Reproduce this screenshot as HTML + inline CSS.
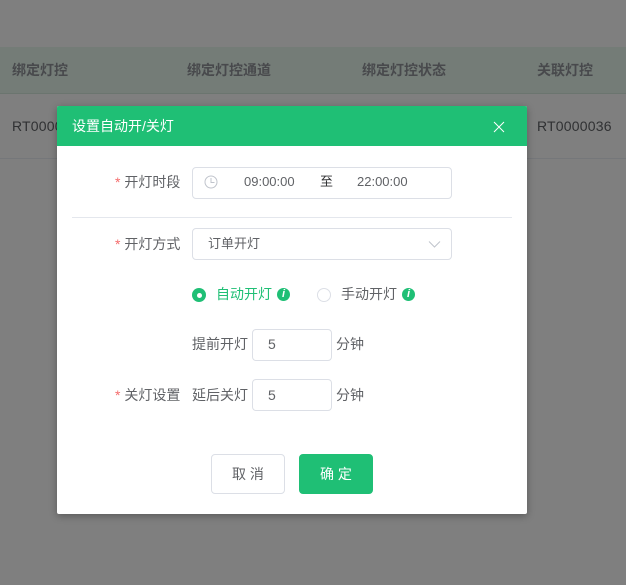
<!DOCTYPE html>
<html><head><meta charset="utf-8">
<style>
html,body{margin:0;padding:0;width:626px;height:585px;overflow:hidden;background:#fff}
body{font-family:"Liberation Sans","Noto Sans CJK SC",sans-serif;font-size:14px;color:#606266;position:relative}
.a{position:absolute;white-space:nowrap;line-height:20px}
.t13{font-size:13px}
.th{top:60px;font-weight:bold;color:#909399}
.mask{position:absolute;left:0;top:0;width:626px;height:585px;background:rgba(0,0,0,.5)}
.dlg{position:absolute;left:57px;top:106px;width:470px;height:408px;background:#fff;border-radius:2px;box-shadow:0 2px 8px rgba(0,0,0,.3)}
.hd{position:absolute;left:0;top:0;width:470px;height:40px;background:#1fbf75;border-radius:2px 2px 0 0}
.box{position:absolute;box-sizing:border-box;background:#fff;border:1px solid #dcdfe6;border-radius:4px}
.s{color:#f56c6c}
.i{position:absolute;width:13px;height:13px;border-radius:50%;background:#1fbf75;color:#fff;font:italic bold 11px/13px "Liberation Sans",sans-serif;text-align:center}
</style></head><body>
<div style="position:absolute;left:0;top:47px;width:626px;height:47px;background:#e8f8ef;border-bottom:1px solid #d6eadf;box-sizing:border-box"></div>
<div style="position:absolute;left:0;top:158px;width:626px;height:1px;background:#ebeef5"></div>
<div class="a th" style="left:12px">绑定灯控</div>
<div class="a th" style="left:187px">绑定灯控通道</div>
<div class="a th" style="left:362px">绑定灯控状态</div>
<div class="a th" style="left:537px">关联灯控</div>
<div class="a" style="left:12px;top:116px;letter-spacing:.2px">RT0000036</div>
<div class="a" style="left:537px;top:116px;letter-spacing:.2px">RT0000036</div>
<div class="mask"></div>
<div class="dlg">
  <div class="hd"></div>
  <div class="a" style="left:15px;top:10px;color:#fff">设置自动开/关灯</div>
  <svg style="position:absolute;left:436px;top:15px" width="12" height="12" viewBox="0 0 12 12"><path d="M1 1L11 11M11 1L1 11" stroke="#fff" stroke-width="1" fill="none"/></svg>

  <div class="a" style="left:58px;top:66px"><span class="s">*</span> 开灯时段</div>
  <div class="box" style="left:135px;top:61px;width:260px;height:32px"></div>
  <svg style="position:absolute;left:147px;top:69px" width="14" height="14" viewBox="0 0 14 14"><circle cx="7" cy="7" r="6" fill="none" stroke="#c0c4cc" stroke-width="1"/><path d="M7 3V7.500H10.500" fill="none" stroke="#c0c4cc" stroke-width="1"/></svg>
  <div class="a t13" style="left:187px;top:66px">09:00:00</div>
  <div class="a t13" style="left:263px;top:66px;color:#303133">至</div>
  <div class="a t13" style="left:300px;top:66px">22:00:00</div>

  <div style="position:absolute;left:15px;top:111px;width:440px;height:1px;background:#e4e7ed"></div>

  <div class="a" style="left:58px;top:128px"><span class="s">*</span> 开灯方式</div>
  <div class="box" style="left:135px;top:122px;width:260px;height:32px"></div>
  <div class="a t13" style="left:151px;top:128px">订单开灯</div>
  <svg style="position:absolute;left:371px;top:134px" width="14" height="9" viewBox="0 0 14 9"><path d="M1 1.500L6.500 7L12 1.500" fill="none" stroke="#c0c4cc" stroke-width="1"/></svg>

  <div style="position:absolute;left:135px;top:182px;width:14px;height:14px;border-radius:50%;background:#1fbf75"></div>
  <div style="position:absolute;left:139.500px;top:186.500px;width:5px;height:5px;border-radius:50%;background:#fff"></div>
  <div class="a" style="left:159px;top:178px;color:#1fbf75">自动开灯</div>
  <div class="i" style="left:220px;top:182px">i</div>
  <div style="position:absolute;left:260px;top:182px;width:14px;height:14px;box-sizing:border-box;border-radius:50%;background:#fff;border:1px solid #dcdfe6"></div>
  <div class="a" style="left:284px;top:178px">手动开灯</div>
  <div class="i" style="left:345px;top:182px">i</div>

  <div class="a" style="left:135px;top:228px">提前开灯</div>
  <div class="box" style="left:195px;top:223px;width:80px;height:32px"></div>
  <div class="a" style="left:211px;top:228px">5</div>
  <div class="a" style="left:279px;top:228px">分钟</div>

  <div class="a" style="left:58px;top:279px"><span class="s">*</span> 关灯设置</div>
  <div class="a" style="left:135px;top:279px">延后关灯</div>
  <div class="box" style="left:195px;top:273px;width:80px;height:32px"></div>
  <div class="a" style="left:211px;top:279px">5</div>
  <div class="a" style="left:279px;top:279px">分钟</div>

  <div class="box" style="left:154px;top:348px;width:74px;height:40px;text-align:center;line-height:39px">取 消</div>
  <div class="box" style="left:242px;top:348px;width:74px;height:40px;text-align:center;line-height:39px;background:#1fbf75;border-color:#1fbf75;color:#fff">确 定</div>
</div>
</body></html>
